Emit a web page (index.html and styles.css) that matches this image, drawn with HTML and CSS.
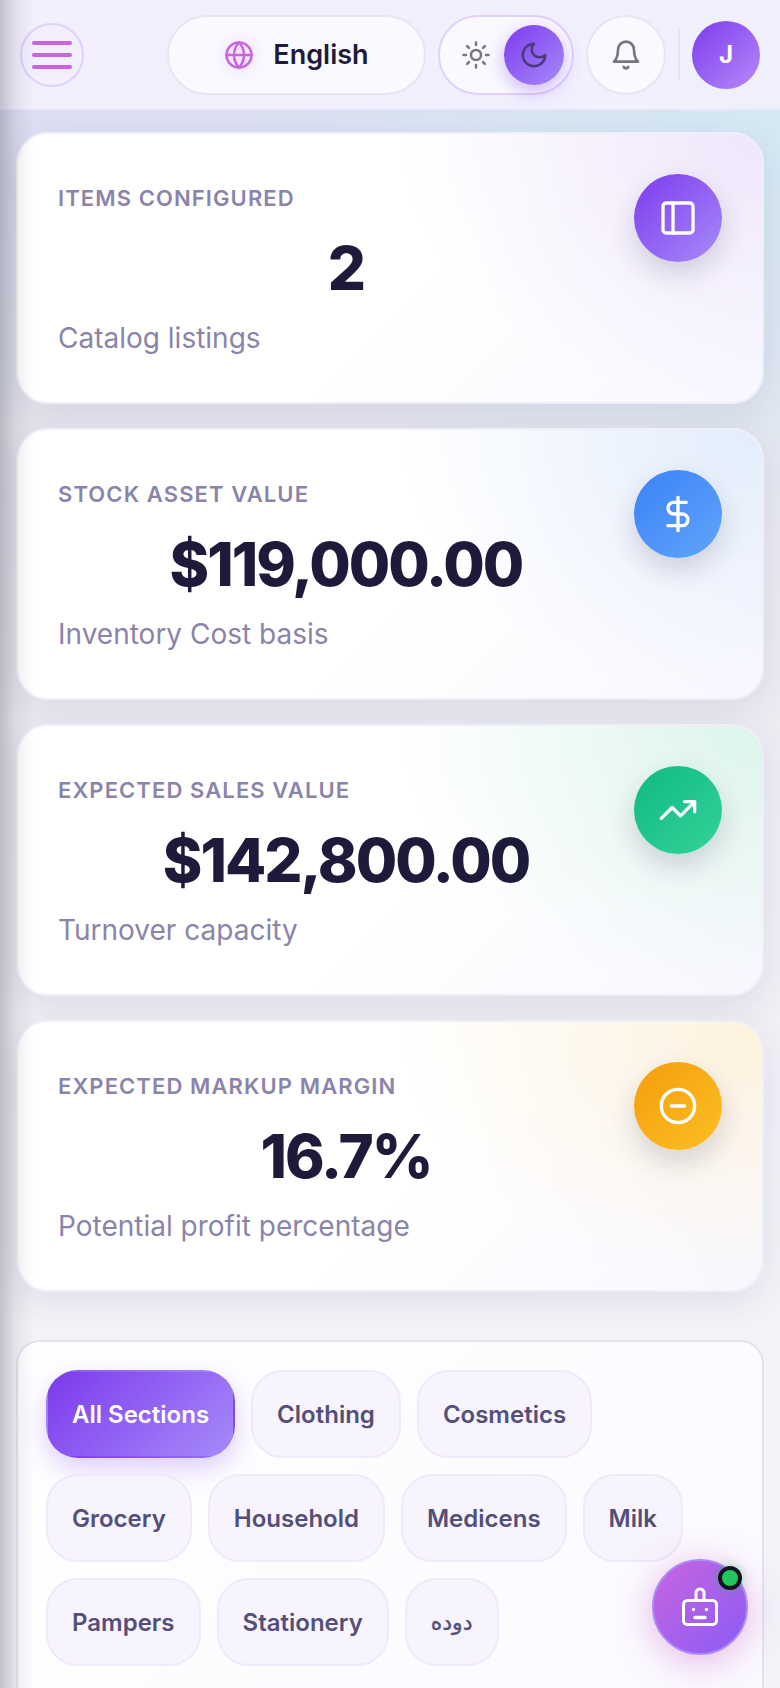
FILE: index.html
```html
<!DOCTYPE html>
<html lang="en">
<head>
    <meta charset="UTF-8">
    <meta name="viewport" content="width=device-width, initial-scale=1.0">
    <title>Inventory Dashboard</title>
    <link rel="stylesheet" href="styles.css">
</head>
<body>
    <div class="edge-shade"></div>

    <header class="topbar">
        <button class="menu-btn" aria-label="Menu">
            <span></span><span></span><span></span>
        </button>

        <button class="lang-btn">
            <svg class="globe" width="30" height="30" viewBox="0 0 24 24"><circle cx="12" cy="12" r="10"/><path d="M12 2a14.5 14.5 0 0 0 0 20 14.5 14.5 0 0 0 0-20"/><path d="M2 12h20"/></svg>
            English
        </button>

        <div class="theme-toggle">
            <svg class="sun" width="30" height="30" viewBox="0 0 24 24"><circle cx="12" cy="12" r="4"/><path d="M12 2v2M12 20v2M4.93 4.93l1.41 1.41M17.66 17.66l1.41 1.41M2 12h2M20 12h2M6.34 17.66l-1.41 1.41M19.07 4.93l-1.41 1.41"/></svg>
            <span class="knob">
                <svg width="30" height="30" viewBox="0 0 24 24"><path d="M12 3a6 6 0 0 0 9 9 9 9 0 1 1-9-9Z"/></svg>
            </span>
        </div>

        <button class="bell-btn" aria-label="Notifications">
            <svg width="32" height="32" viewBox="0 0 24 24"><path d="M6 8a6 6 0 0 1 12 0c0 7 3 9 3 9H3s3-2 3-9"/><path d="M10.3 21a1.94 1.94 0 0 0 3.4 0"/></svg>
        </button>

        <div class="divider"></div>
        <div class="avatar">J</div>
    </header>

    <main class="content">
        <section class="stat-card tint-purple">
            <div class="stat-text">
                <div class="stat-label">ITEMS CONFIGURED</div>
                <div class="stat-value">2</div>
                <div class="stat-sub">Catalog listings</div>
            </div>
            <div class="stat-icon icon-purple">
                <svg width="40" height="40" viewBox="0 0 24 24"><rect x="3" y="3" width="18" height="18" rx="2"/><path d="M9 3v18"/></svg>
            </div>
        </section>

        <section class="stat-card tint-blue">
            <div class="stat-text">
                <div class="stat-label">STOCK ASSET VALUE</div>
                <div class="stat-value">$119,000.00</div>
                <div class="stat-sub">Inventory Cost basis</div>
            </div>
            <div class="stat-icon icon-blue">
                <svg width="40" height="40" viewBox="0 0 24 24"><path d="M12 2v20"/><path d="M17 5H9.5a3.5 3.5 0 0 0 0 7h5a3.5 3.5 0 0 1 0 7H6"/></svg>
            </div>
        </section>

        <section class="stat-card tint-green">
            <div class="stat-text">
                <div class="stat-label">EXPECTED SALES VALUE</div>
                <div class="stat-value">$142,800.00</div>
                <div class="stat-sub">Turnover capacity</div>
            </div>
            <div class="stat-icon icon-green">
                <svg width="40" height="40" viewBox="0 0 24 24"><path d="m22 7-8.5 8.5-5-5L2 17"/><path d="M16 7h6v6"/></svg>
            </div>
        </section>

        <section class="stat-card tint-amber">
            <div class="stat-text">
                <div class="stat-label">EXPECTED MARKUP MARGIN</div>
                <div class="stat-value">16.7%</div>
                <div class="stat-sub">Potential profit percentage</div>
            </div>
            <div class="stat-icon icon-amber">
                <svg width="40" height="40" viewBox="0 0 24 24"><circle cx="12" cy="12" r="10"/><path d="M8 12h8"/></svg>
            </div>
        </section>

        <section class="filter-panel">
            <button class="chip chip-active">All Sections</button>
            <button class="chip">Clothing</button>
            <button class="chip">Cosmetics</button>
            <button class="chip">Grocery</button>
            <button class="chip">Household</button>
            <button class="chip">Medicens</button>
            <button class="chip">Milk</button>
            <button class="chip">Pampers</button>
            <button class="chip">Stationery</button>
            <button class="chip chip-arabic" lang="ur">دوده</button>
        </section>
    </main>

    <button class="bot-btn" aria-label="Assistant">
        <svg width="44" height="44" viewBox="0 0 44 44"><rect x="5.5" y="15.5" width="33" height="24" rx="4"/><path d="M18 15V8a4 4 0 0 1 8 0v7"/><path class="bot-face" d="M15.5 24.5h.01M28.5 24.5h.01M17 32.5h10"/></svg>
        <span class="bot-dot"></span>
    </button>
</body>
</html>
```

FILE: styles.css
```css
* {
    box-sizing: border-box;
}

html, body {
    height: 100%;
}

body {
    margin: 0;
    overflow: hidden;
    font-family: Inter, "DejaVu Sans", sans-serif;
    color: #1e1b3a;
    background:
        radial-gradient(ellipse 560px 420px at 100% 110px, #d4e9f4, rgba(212, 233, 244, 0)),
        linear-gradient(180deg, #dde0f2 110px, #e6e7ef 420px, #eeeef4 800px, #f3f3f8 1340px);
}

button {
    font-family: inherit;
    cursor: pointer;
}

svg {
    fill: none;
    stroke: currentColor;
    stroke-width: 2;
    stroke-linecap: round;
    stroke-linejoin: round;
    display: block;
}

/* shadow of the closed drawer, lies over everything on the left */
.edge-shade {
    position: fixed;
    top: 0;
    bottom: 0;
    left: 0;
    width: 34px;
    z-index: 20;
    pointer-events: none;
    background: linear-gradient(90deg, rgba(40, 40, 60, 0.24), rgba(40, 40, 60, 0.08) 45%, rgba(40, 40, 60, 0));
}

.topbar {
    height: 110px;
    padding: 0 20px;
    display: flex;
    align-items: center;
    gap: 12px;
    background: linear-gradient(90deg, #f3effd, #f0f0fd);
    border-bottom: 1px solid #ece6fa;
}

.menu-btn {
    width: 64px;
    height: 64px;
    margin-right: auto;
    padding: 0;
    display: flex;
    flex-direction: column;
    align-items: center;
    justify-content: center;
    gap: 8px;
    border: 2px solid #e0d0fb;
    border-radius: 50%;
    background: transparent;
}

.menu-btn span {
    width: 40px;
    height: 4px;
    border-radius: 2px;
    background: #c864e0;
}

.lang-btn {
    width: 259px;
    height: 80px;
    display: flex;
    align-items: center;
    justify-content: center;
    gap: 19px;
    border: 2px solid #e8e6f0;
    border-radius: 40px;
    background: #faf9ff;
    color: #1e1b3a;
    font-size: 27px;
    font-weight: 600;
}

.globe {
    color: #c864e0;
    filter: drop-shadow(0 0 8px rgba(200, 100, 224, 0.35));
}

.theme-toggle {
    width: 136px;
    height: 80px;
    padding: 0 8px 0 21px;
    display: flex;
    align-items: center;
    justify-content: space-between;
    border: 2px solid #e2d0fb;
    border-radius: 40px;
    background: #faf9ff;
}

.sun {
    color: #777580;
}

.knob {
    width: 60px;
    height: 60px;
    display: flex;
    align-items: center;
    justify-content: center;
    border-radius: 50%;
    color: #4a3b7c;
    background: linear-gradient(135deg, #7c3aed, #a78bfa);
    box-shadow: 0 6px 18px rgba(124, 58, 237, 0.35);
}

.bell-btn {
    width: 80px;
    height: 80px;
    padding: 0;
    display: flex;
    align-items: center;
    justify-content: center;
    border: 2px solid #e8e6f0;
    border-radius: 50%;
    background: #faf9ff;
    color: #777580;
}

.divider {
    width: 2px;
    height: 52px;
    background: #e6e2f2;
}

.avatar {
    width: 68px;
    height: 68px;
    display: flex;
    align-items: center;
    justify-content: center;
    border-radius: 50%;
    color: #fff;
    font-size: 24px;
    font-weight: 700;
    background: linear-gradient(135deg, #7c3aed, #b78bfa);
}

.content {
    padding: 22px 16px 0;
    display: flex;
    flex-direction: column;
    gap: 24px;
}

.stat-card {
    height: 272px;
    padding: 40px;
    display: flex;
    align-items: flex-start;
    border: 2px solid #f0eef8;
    border-radius: 32px;
    box-shadow: 0 10px 34px rgba(60, 50, 110, 0.1);
}

.tint-purple {
    background: radial-gradient(ellipse 360px 270px at 100% 0, #efe6fb 0, rgba(239, 230, 251, 0) 100%), linear-gradient(135deg, #fff 55%, #f8f7ff);
}

.tint-blue {
    background: radial-gradient(ellipse 360px 270px at 100% 0, #e3edfc 0, rgba(227, 237, 252, 0) 100%), linear-gradient(135deg, #fff 55%, #f8f7ff);
}

.tint-green {
    background: radial-gradient(ellipse 360px 270px at 100% 0, #dcf5ea 0, rgba(220, 245, 234, 0) 100%), linear-gradient(135deg, #fff 55%, #f8f7ff);
}

.tint-amber {
    background: radial-gradient(ellipse 360px 270px at 100% 0, #fdf2dc 0, rgba(253, 242, 220, 0) 100%), linear-gradient(135deg, #fff 55%, #f8f7ff);
}

.stat-text {
    flex: 1;
    min-width: 0;
}

.stat-label {
    margin-top: 8px;
    font-size: 22px;
    line-height: 33px;
    font-weight: 600;
    letter-spacing: 0.05em;
    color: #8b84aa;
}

.stat-value {
    margin-top: 15px;
    text-align: center;
    font-size: 60px;
    line-height: 77px;
    font-weight: 800;
    letter-spacing: -2px;
    color: #1e1b3a;
}

.stat-sub {
    margin-top: 10px;
    font-size: 28px;
    line-height: 42px;
    color: #8b84aa;
}

.stat-icon {
    flex: none;
    width: 88px;
    height: 88px;
    display: flex;
    align-items: center;
    justify-content: center;
    border-radius: 50%;
    color: #fff;
    box-shadow: 0 12px 28px rgba(40, 40, 70, 0.18);
}

.icon-purple {
    background: linear-gradient(135deg, #7c3aed, #a78bfa);
}

.icon-blue {
    background: linear-gradient(135deg, #3b82f6, #60a5fa);
}

.icon-green {
    background: linear-gradient(135deg, #10b981, #34d399);
}

.icon-amber {
    background: linear-gradient(135deg, #f59e0b, #fbbf24);
}

.filter-panel {
    margin-top: 24px;
    min-height: 420px;
    padding: 28px;
    display: flex;
    flex-wrap: wrap;
    align-content: flex-start;
    gap: 16px;
    border: 2px solid #e3e2ee;
    border-radius: 24px;
    background: linear-gradient(135deg, #fff, #faf9ff);
}

.chip {
    height: 88px;
    padding: 0 24px;
    border: 2px solid #efe9fb;
    border-radius: 32px;
    background: #f7f4fe;
    color: #544f79;
    font-size: 24px;
    font-weight: 600;
}

.chip-arabic {
    font-weight: 400;
    font-size: 22px;
    -webkit-text-stroke: 0.4px #544f79;
}

.chip-active {
    border-color: transparent;
    color: #fff;
    background: linear-gradient(135deg, #7c3aed, #a78bfa);
    box-shadow: 0 10px 26px rgba(124, 58, 237, 0.25);
}

.bot-btn {
    position: fixed;
    right: 32px;
    bottom: 33px;
    width: 96px;
    height: 96px;
    padding: 0;
    display: flex;
    align-items: center;
    justify-content: center;
    border: 2px solid #a98cf5;
    border-radius: 50%;
    color: #fff;
    background: linear-gradient(135deg, #c864e0, #8b5cf6);
    box-shadow: 0 6px 36px rgba(208, 90, 200, 0.45);
}

.bot-btn svg {
    stroke-width: 3;
}

.bot-face {
    stroke-width: 3.4;
}

.bot-dot {
    position: absolute;
    top: 5px;
    right: 4px;
    width: 24px;
    height: 24px;
    border: 4px solid #15131f;
    border-radius: 50%;
    background: #22c55e;
    box-shadow: 0 0 10px rgba(34, 197, 94, 0.5);
}
```
